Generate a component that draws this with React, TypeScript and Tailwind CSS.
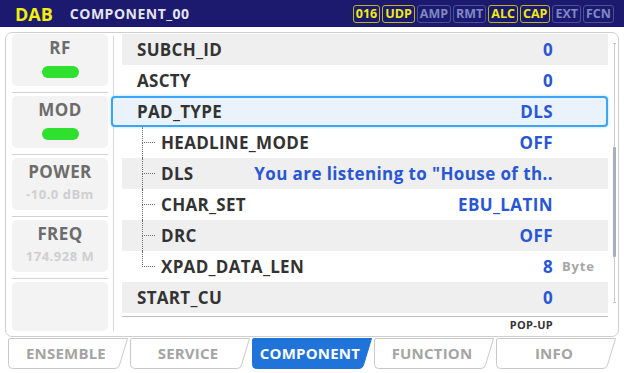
import React from 'react';

type Row = {
  label: string;
  value: string;
  selected?: boolean;
  child?: boolean;
  last?: boolean;
  unit?: string;
};

const rows: Row[] = [
  { label: 'SUBCH_ID', value: '0' },
  { label: 'ASCTY', value: '0' },
  { label: 'PAD_TYPE', value: 'DLS', selected: true },
  { label: 'HEADLINE_MODE', value: 'OFF', child: true },
  { label: 'DLS', value: 'You are listening to "House of th..', child: true },
  { label: 'CHAR_SET', value: 'EBU_LATIN', child: true },
  { label: 'DRC', value: 'OFF', child: true },
  { label: 'XPAD_DATA_LEN', value: '8', unit: 'Byte', child: true, last: true },
  { label: 'START_CU', value: '0' },
];

const badges = [
  { t: '016', on: true },
  { t: 'UDP', on: true },
  { t: 'AMP', on: false },
  { t: 'RMT', on: false },
  { t: 'ALC', on: true },
  { t: 'CAP', on: true },
  { t: 'EXT', on: false },
  { t: 'FCN', on: false },
];

const tabs = ['ENSEMBLE', 'SERVICE', 'COMPONENT', 'FUNCTION', 'INFO'];

function StatusCell({ label, value, led }: { label?: string; value?: string; led?: boolean }) {
  return (
    <div className="flex h-[52px] flex-col items-center rounded-[5px] bg-[#f3f3f3]">
      {label && (
        <span className="mt-[4px] text-[17px] font-bold leading-[20px] tracking-[0.4px] text-[#6c6c6c]">
          {label}
        </span>
      )}
      {led && <span className="mt-[8px] h-[12px] w-[37px] rounded-full bg-[#2fe02f]" />}
      {value && (
        <span className="mt-[4px] whitespace-pre text-[13px] font-bold leading-[16px] tracking-[0.5px] text-[#cfcfcf]">
          {value}
        </span>
      )}
    </div>
  );
}

function Separator() {
  return <div className="mb-[3px] mt-[6px] h-px bg-[#d2d2d2]" />;
}

function TreeGutter({ last }: { last?: boolean }) {
  return (
    <div className="ml-[20px] flex h-full w-[13px] flex-col">
      <div className="h-1/2 border-b border-l border-dotted border-[#6f6f6f]" />
      <div className={`h-1/2 ${last ? '' : 'border-l border-dotted border-[#6f6f6f]'}`} />
    </div>
  );
}

function ListRow({ row, index }: { row: Row; index: number }) {
  const bg = index % 2 === 0 ? 'bg-[#efefef]' : 'bg-white';
  const base = row.selected
    ? 'relative z-10 -ml-[11px] h-[31px] rounded-[4px] border-2 border-[#3aa5f3] bg-[#eaf3fb] pl-[24px] shadow-[0_0_3px_#a9d6fa]'
    : `h-[31px] ${bg} ${row.child ? '' : 'pl-[15px]'}`;
  return (
    <div className={`flex items-center ${base}`}>
      {row.child && <TreeGutter last={row.last} />}
      <span
        className={`text-[17px] font-bold tracking-[0.3px] text-[#333333] ${row.child ? 'ml-[6px]' : ''}`}
      >
        {row.label}
      </span>
      <span className="ml-auto whitespace-nowrap text-[17px] font-bold tracking-[0.4px] text-[#2957d4]">
        {row.value}
      </span>
      <span
        className={`${row.selected ? 'w-[53px]' : 'w-[55px]'} pl-[9px] text-[13px] font-bold tracking-[0.8px] text-[#a6a6a6]`}
      >
        {row.unit}
      </span>
    </div>
  );
}

function Tab({ label, active }: { label: string; active?: boolean }) {
  return (
    <div className="relative flex h-[31px] w-[120px] items-center justify-center">
      <svg className="absolute inset-0" width="120" height="31" viewBox="0 0 120 31">
        <path
          d="M0.5 2 Q0.5 0.5 2 0.5 H119.5 L111.5 27 Q110.5 30.5 107 30.5 H4.5 Q0.5 30.5 0.5 26.5 Z"
          fill={active ? '#1f73d9' : '#ffffff'}
          stroke={active ? '#1f73d9' : '#c9c9c9'}
          strokeWidth="1"
        />
      </svg>
      <span
        className={`relative -ml-[4px] text-[15px] font-bold tracking-[0.2px] ${active ? 'text-white' : 'text-[#a4a4a4]'}`}
      >
        {label}
      </span>
    </div>
  );
}

export default function App() {
  return (
    <div className="h-[373px] w-[624px] overflow-hidden bg-white font-['Open_Sans',sans-serif]">
      {/* title bar */}
      <div className="flex h-[27px] items-center bg-[#1b1a6e] pl-[15px] pr-[10px]">
        <span className="text-[18px] font-bold leading-none text-[#f3ee0b]">DAB</span>
        <span className="ml-[17px] text-[14px] font-bold leading-none tracking-[0.5px] text-[#e4e4f0]">
          COMPONENT_00
        </span>
        <div className="ml-auto flex gap-[2px]">
          {badges.map((b) => (
            <span
              key={b.t}
              className={`h-[18px] rounded-[3px] border px-[2px] text-[12.5px] font-bold leading-[16px] ${
                b.on ? 'border-[#bdb323] text-[#f1eb12]' : 'border-[#4c5193] text-[#8088c3]'
              }`}
            >
              {b.t}
            </span>
          ))}
        </div>
      </div>

      {/* main panel */}
      <div className="mx-[5px] mt-[5px] flex h-[305px] rounded-[7px] border border-[#cfcfcf] pl-[6px]">
        <div className="flex w-[96px] flex-col pt-[1px]">
          <StatusCell label="RF" led />
          <Separator />
          <StatusCell label="MOD" led />
          <Separator />
          <StatusCell label="POWER" value="-10.0 dBm" />
          <Separator />
          <StatusCell label="FREQ" value="174.928 M" />
          <Separator />
          <div className="h-[49px] rounded-[5px] bg-[#f3f3f3]" />
        </div>

        <div className="ml-[5px] mt-[3px] h-[295px] w-px bg-[#d6d6d6]" />

        <div className="ml-[8px] flex w-[486px] flex-col pt-[1px]">
          {rows.map((r, i) => (
            <ListRow key={r.label} row={r} index={i} />
          ))}
          <div className="mt-[3px] h-px bg-[#bdbdbd]" />
          <div className="flex justify-end pr-[55px]">
            <span className="mt-[1px] text-[11px] font-bold leading-[14px] tracking-[0.3px] text-[#333333]">
              POP-UP
            </span>
          </div>
        </div>

        <div className="ml-[5px] mt-[10px] flex w-[3px] flex-col items-center">
          <div className="h-px w-[3px] bg-[#c4c4c4]" />
          <div className="h-[103px] w-px bg-[#cccccc]" />
          <div className="h-[110px] w-[3px] rounded-[1px] bg-[#a7b0bc]" />
          <div className="h-[45px] w-px bg-[#cccccc]" />
          <div className="h-px w-[3px] bg-[#c4c4c4]" />
        </div>
      </div>

      {/* tabs */}
      <div className="mt-[1px] flex gap-[2px] pl-[8px]">
        {tabs.map((t) => (
          <Tab key={t} label={t} active={t === 'COMPONENT'} />
        ))}
      </div>
    </div>
  );
}
